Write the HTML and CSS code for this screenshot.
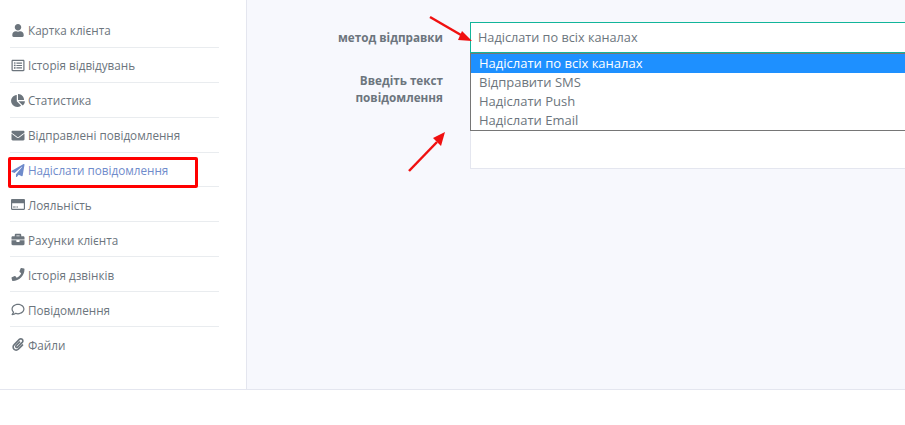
FILE: index.html
```html
<!DOCTYPE html>
<html lang="uk">
<head>
 <meta charset="UTF-8">
 <title>Надіслати повідомлення</title>
 <link rel="stylesheet" href="styles.css">
</head>
<body>
 <div class="layout">
  <aside class="sidebar">
   <ul class="menu">
    <li class="menu-item"><svg class="icon" viewBox="0 0 448 512"><path d="M224 256c70.7 0 128-57.3 128-128S294.7 0 224 0 96 57.3 96 128s57.3 128 128 128zm89.6 32h-16.7c-22.2 10.2-46.9 16-72.9 16s-50.6-5.8-72.9-16h-16.7C60.2 288 0 348.2 0 422.4V464c0 26.5 21.5 48 48 48h352c26.5 0 48-21.5 48-48v-41.6c0-74.2-60.2-134.4-134.4-134.4z"/></svg>Картка клієнта</li>
    <li class="menu-item"><svg class="icon" viewBox="0 0 512 512"><path d="M464 32H48C21.49 32 0 53.49 0 80v352c0 26.51 21.49 48 48 48h416c26.51 0 48-21.49 48-48V80c0-26.51-21.49-48-48-48zm-6 400H54a6 6 0 0 1-6-6V86a6 6 0 0 1 6-6h404a6 6 0 0 1 6 6v340a6 6 0 0 1-6 6zm-42-92v24c0 6.627-5.373 12-12 12H204c-6.627 0-12-5.373-12-12v-24c0-6.627 5.373-12 12-12h200c6.627 0 12 5.373 12 12zm0-96v24c0 6.627-5.373 12-12 12H204c-6.627 0-12-5.373-12-12v-24c0-6.627 5.373-12 12-12h200c6.627 0 12 5.373 12 12zm0-96v24c0 6.627-5.373 12-12 12H204c-6.627 0-12-5.373-12-12v-24c0-6.627 5.373-12 12-12h200c6.627 0 12 5.373 12 12zm-252 12c0 19.882-16.118 36-36 36s-36-16.118-36-36 16.118-36 36-36 36 16.118 36 36zm0 96c0 19.882-16.118 36-36 36s-36-16.118-36-36 16.118-36 36-36 36 16.118 36 36zm0 96c0 19.882-16.118 36-36 36s-36-16.118-36-36 16.118-36 36-36 36 16.118 36 36z"/></svg>Історія відвідувань</li>
    <li class="menu-item"><svg class="icon" viewBox="0 0 544 512"><path d="M527.79 288H290.5l158.03 158.03c6.04 6.04 15.98 6.53 22.19.68 38.7-36.46 65.32-85.61 73.13-140.86 1.34-9.46-6.51-17.85-16.06-17.85zm-15.83-64.8C503.72 103.74 408.26 8.28 288.8.04 279.68-.59 272 7.1 272 16.24V240h223.77c9.14 0 16.82-7.68 16.19-16.8zM224 288V50.71c0-9.55-8.39-17.4-17.84-16.06C86.99 51.49-4.1 155.6.14 280.37 4.5 408.51 114.83 513.59 243.03 511.98c50.4-.63 96.97-16.87 135.26-44.03 7.9-5.6 8.42-17.23 1.57-24.08L224 288z"/></svg>Статистика</li>
    <li class="menu-item"><svg class="icon" viewBox="0 0 512 512"><path d="M502.3 190.8c3.9-3.1 9.7-.2 9.7 4.7V400c0 26.5-21.5 48-48 48H48c-26.5 0-48-21.5-48-48V195.6c0-5 5.7-7.8 9.7-4.7 22.4 17.4 52.1 39.5 154.1 113.6 21.1 15.4 56.7 47.8 92.2 47.6 35.7.3 72-32.8 92.3-47.6 102-74.1 131.6-96.3 154-113.7zM256 320c23.2.4 56.6-29.2 73.4-41.4 132.7-96.3 142.8-104.7 173.4-128.7 5.8-4.5 9.2-11.5 9.2-18.9v-19c0-26.5-21.5-48-48-48H48C21.5 64 0 85.5 0 112v19c0 7.4 3.4 14.3 9.2 18.9 30.6 23.9 40.7 32.4 173.4 128.7 16.8 12.2 50.2 41.8 73.4 41.4z"/></svg>Відправлені повідомлення</li>
    <li class="menu-item active"><svg class="icon" viewBox="0 0 512 512"><path d="M476 3.2L12.5 270.6c-18.1 10.4-15.8 35.6 2.2 43.2L121 358.4l287.3-253.2c5.5-4.9 13.3 2.6 8.6 8.3L176 407v80.5c0 23.6 28.5 32.9 42.5 15.8L282 426l124.6 52.2c14.2 6 30.4-2.9 33-18.2l72-432C515 7.8 493.3-6.8 476 3.2z"/></svg>Надіслати повідомлення<span class="highlight"></span></li>
    <li class="menu-item"><svg class="icon" viewBox="0 0 576 512"><path fill-rule="evenodd" d="M528 32H48C21.5 32 0 53.5 0 80v352c0 26.5 21.5 48 48 48h480c26.500 0 48-21.500 48-48V80c0-26.500-21.500-48-48-48zM48 208h480v218c0 3.300-2.700 6-6 6H54c-3.300 0-6-2.700-6-6V208zM80 340h112v44H80zM224 340h64v44h-64z"/></svg>Лояльність</li>
    <li class="menu-item"><svg class="icon" viewBox="0 0 512 512"><path d="M320 336c0 8.840-7.160 16-16 16h-96c-8.840 0-16-7.160-16-16v-48H0v144c0 25.600 22.400 48 48 48h416c25.600 0 48-22.400 48-48V288H320v48zm144-208h-80V80c0-25.600-22.400-48-48-48H176c-25.600 0-48 22.400-48 48v48H48c-25.600 0-48 22.400-48 48v80h512v-80c0-25.600-22.400-48-48-48zm-144 0H192V96h128v32z"/></svg>Рахунки клієнта</li>
    <li class="menu-item"><svg class="icon" viewBox="0 0 512 512"><path d="M493.400 24.600l-104-24c-11.300-2.600-22.900 3.300-27.500 13.900l-48 112c-4.200 9.800-1.400 21.300 6.900 28l60.600 49.600c-36 76.700-98.900 140.500-177.200 177.200l-49.600-60.600c-6.800-8.300-18.200-11.100-28-6.900l-112 48C3.900 366.500-2 378.100.6 389.400l24 104C27.100 504.200 36.700 512 48 512c256.100 0 464-207.500 464-464 0-11.200-7.700-20.900-18.600-23.400z"/></svg>Історія дзвінків</li>
    <li class="menu-item"><svg class="icon" viewBox="0 0 512 512"><path d="M256 32C114.600 32 0 125.100 0 240c0 47.600 19.900 91.200 52.900 126.300C38 405.700 7 439.100 6.500 439.500c-6.600 7-8.400 17.200-4.600 26S14.400 480 24 480c61.500 0 110-25.700 139.100-46.300C192 442.800 223.200 448 256 448c141.400 0 256-93.100 256-208S397.400 32 256 32zm0 368c-26.700 0-53.100-4.100-78.400-12.100l-22.700-7.200-19.500 13.800c-14.300 10.100-33.900 21.400-57.500 29 7.300-12.100 14.400-25.700 19.900-40.200l10.600-28.100-20.600-21.800C69.700 314.100 48 282.200 48 240c0-88.200 93.300-160 208-160s208 71.800 208 160-93.300 160-208 160z"/></svg>Повідомлення</li>
    <li class="menu-item"><svg class="icon" viewBox="0 0 448 512"><path d="M43.246 466.142c-58.430-60.289-57.341-157.511 1.386-217.581L254.392 34c44.316-45.332 116.351-45.336 160.671 0 43.890 44.894 43.943 117.329 0 162.276L232.214 383.128c-29.855 30.537-78.633 30.111-107.982-.998-28.275-29.970-27.368-77.473 1.452-106.953l143.743-146.835c6.182-6.314 16.312-6.422 22.626-.241l22.861 22.379c6.315 6.182 6.422 16.312.241 22.626L171.427 319.927c-4.932 5.045-5.236 13.428-.648 18.292 4.372 4.634 11.245 4.711 15.688.165l182.849-186.851c19.613-20.050 19.613-52.292-.011-72.369-19.189-19.627-49.957-19.637-69.154 0L90.390 293.295c-34.763 35.560-35.299 93.120-1.191 128.313 34.010 35.093 88.985 35.137 123.058.286l172.060-175.999c6.177-6.319 16.307-6.433 22.626-.256l22.877 22.364c6.319 6.177 6.434 16.307.256 22.626l-172.060 175.998c-59.576 60.938-155.943 60.216-214.770-.485z"/></svg>Файли</li>
   </ul>
  </aside>
  <main class="content">
   <div class="form-row">
    <label class="form-label">метод відправки</label>
    <div class="select-wrap">
     <div class="select-box">Надіслати по всіх каналах</div>
     <ul class="select-list">
      <li class="option selected">Надіслати по всіх каналах</li>
      <li class="option">Відправити SMS</li>
      <li class="option">Надіслати Push</li>
      <li class="option">Надіслати Email</li>
     </ul>
    </div>
   </div>
   <div class="form-row message-row">
    <label class="form-label">Введіть текст<br>повідомлення</label>
    <div class="message-box"></div>
   </div>
  </main>
 </div>

 <svg class="arrows" viewBox="0 0 905 425">
  <path class="arrow-line" d="M430 17L461 35"/>
  <path class="arrow-head" d="M472 41L458 40L462 31Z"/>
  <path class="arrow-line" d="M409 171L437 142"/>
  <path class="arrow-head" d="M445 132L441 146L433 138Z"/>
 </svg>
</body>
</html>
```

FILE: styles.css
```css
html, body {
 margin: 0;
 height: 100%;
 overflow: hidden;
 background: #fff;
}
body {
 font-family: "Open Sans", sans-serif;
 font-size: 11.7px;
 color: #6c757d;
 position: relative;
}
.layout {
 display: flex;
 height: 389px;
 border-bottom: 1px solid #e4e6ef;
}
.sidebar {
 width: 209px;
 flex-shrink: 0;
 background: #fff;
 border-right: 1px solid #e4e6ef;
 padding: 13px 27px 0 10px;
}
.menu {
 list-style: none;
 margin: 0;
 padding: 0;
}
.menu-item {
 position: relative;
 display: flex;
 align-items: center;
 height: 34.9px;
 box-sizing: border-box;
 border-bottom: 1px solid #e9ecef;
 padding: 1px 0 0 1px;
 white-space: nowrap;
}
.menu-item:last-child {
 border-bottom: none;
}
.menu-item.active {
 color: #6f8bcb;
}
.icon {
 width: 14px;
 height: 13px;
 margin-right: 3px;
 fill: currentColor;
 flex-shrink: 0;
}
.highlight {
 position: absolute;
 left: -2px;
 top: 4px;
 width: 184px;
 height: 25px;
 border: 3px solid #f00;
 border-radius: 2px;
}
.content {
 flex: 1;
 min-width: 0;
 background: #f7f8fd;
 padding-top: 22px;
}
.form-row {
 display: flex;
 align-items: flex-start;
}
.form-label {
 width: 196px;
 margin-right: 27px;
 flex-shrink: 0;
 text-align: right;
 font-weight: 700;
 line-height: 17px;
 padding-top: 7px;
}
.select-wrap {
 position: relative;
 flex: 1;
 margin-right: -10px;
}
.select-box {
 height: 29px;
 border: 1px solid #12b59a;
 background: #fff;
 padding-left: 7px;
 font-size: 12.7px;
 line-height: 29px;
}
.select-list {
 position: absolute;
 left: 0;
 right: 0;
 top: 31px;
 margin: 0;
 padding: 0;
 list-style: none;
 background: #fff;
 border: 1px solid #767676;
 z-index: 2;
}
.option {
 height: 19px;
 line-height: 19px;
 padding-left: 8px;
 font-size: 13px;
}
.option.selected {
 background: #1e90ff;
 color: #fff;
}
.message-row {
 margin-top: 12px;
}
.message-box {
 flex: 1;
 height: 102px;
 margin-right: -10px;
 background: #fff;
 border: 1px solid #e4e6ef;
}
.arrows {
 position: absolute;
 left: 0;
 top: 0;
 width: 905px;
 height: 425px;
 pointer-events: none;
}
.arrow-line {
 stroke: #f01010;
 stroke-width: 2.5;
 fill: none;
}
.arrow-head {
 fill: #f01010;
}
```
